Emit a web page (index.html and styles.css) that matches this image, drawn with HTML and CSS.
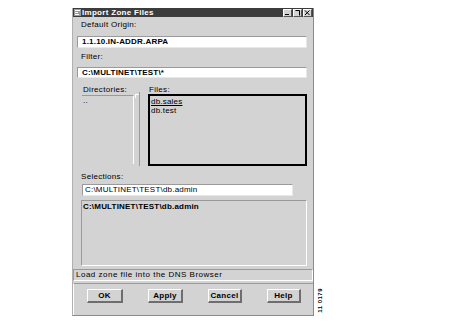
FILE: index.html
```html
<!DOCTYPE html>
<html>
<head>
<meta charset="utf-8">
<link rel="stylesheet" href="styles.css">
</head>
<body>
<div class="page">
  <div class="dialog">
    <div class="titlebar">
      <svg class="ticon" width="7" height="7" viewBox="0 0 7 7"><rect x="0" y="0" width="7" height="7" fill="#9a9a9a"/><rect x="1" y="1" width="5" height="1" fill="#fff"/><rect x="1" y="3" width="3" height="1" fill="#fff"/><rect x="1" y="5" width="4" height="1" fill="#fff"/></svg>
      <span class="ttext">Import Zone Files</span>
      <div class="tbtns">
        <span class="tb"><svg width="7" height="6" viewBox="0 0 7 6"><rect x="1" y="4" width="4" height="1" fill="#000"/></svg></span>
        <span class="tb"><svg width="7" height="6" viewBox="0 0 7 6"><path d="M1.5 0.5H5.5V5.5" fill="none" stroke="#000" stroke-width="1"/></svg></span>
        <span class="tb"><svg width="7" height="6" viewBox="0 0 7 6"><path d="M1 0.5L5.5 5M5.5 0.5L1 5" fill="none" stroke="#000" stroke-width="1"/></svg></span>
      </div>
    </div>
    <div class="body">
      <div class="lbl l-origin">Default Origin:</div>
      <div class="field f-origin">1.1.10.IN-ADDR.ARPA</div>
      <div class="lbl l-filter">Filter:</div>
      <div class="field f-filter">C:\MULTINET\TEST\*</div>
      <div class="mid">
        <div class="dircol">
          <div class="lbl">Directories:</div>
          <div class="dirlist"><div class="item">..</div></div>
        </div>
        <div class="sash"><span class="tick"></span></div>
        <div class="filecol">
          <div class="lbl">Files:</div>
          <div class="filelist">
            <div class="item sel">db.sales</div>
            <div class="item">db.test</div>
          </div>
        </div>
      </div>
      <div class="lbl l-sel">Selections:</div>
      <div class="field f-sel">C:\MULTINET\TEST\db.admin</div>
      <div class="selarea"><div class="item">C:\MULTINET\TEST\db.admin</div></div>
    </div>
    <div class="status">Load zone file into the DNS Browser</div>
    <div class="btnbar">
      <div class="btn b-ok">OK</div>
      <div class="btn b-apply">Apply</div>
      <div class="btn b-cancel">Cancel</div>
      <div class="btn b-help">Help</div>
    </div>
  </div>
  <div class="figid">11 0179</div>
</div>
</body>
</html>
```
FILE: styles.css
```css
html, body {
  margin: 0;
  padding: 0;
  background: #fff;
}
body {
  font-family: "Liberation Sans", Arial, sans-serif;
  font-size: 8px;
  color: #000;
}
.page {
  display: flex;
  align-items: flex-end;
  padding: 8px 0 0 72px;
}
.dialog {
  width: 242px;
  height: 308px;
  box-sizing: border-box;
  background: #d3d3d3;
  border-left: 1px solid #b0b0b0;
  border-right: 1px solid #8a8a8a;
  border-bottom: 1px solid #8a8a8a;
  display: flex;
  flex-direction: column;
}
.titlebar {
  height: 9px;
  background: #3c3c3c;
  display: flex;
  align-items: center;
  color: #fff;
  font-weight: bold;
  line-height: 9px;
}
.ticon {
  margin: 0 1px 0 1px;
}
.ttext {
  flex: 1;
  letter-spacing: 0.3px;
}
.tbtns {
  display: flex;
  margin-right: 1px;
}
.tb {
  width: 9px;
  height: 8px;
  box-sizing: border-box;
  background: #d3d3d3;
  border: 1px solid #fff;
  border-right-color: #555;
  border-bottom-color: #555;
  display: flex;
  align-items: center;
  justify-content: center;
  margin-left: 1px;
}
.tb svg { display: block; }
.body {
  display: flex;
  flex-direction: column;
  padding: 0 6px 0 4px;
  flex: 1;
}
.lbl {
  height: 10px;
  line-height: 10px;
  padding-left: 4px;
  letter-spacing: 0.3px;
  white-space: nowrap;
}
.l-origin { margin-top: 3px; }
.field {
  box-sizing: border-box;
  background: #fff;
  border: 1px solid #9a9a9a;
  border-right-color: #e8e8e8;
  border-bottom-color: #e8e8e8;
  padding-left: 4px;
  font-weight: bold;
  white-space: nowrap;
  letter-spacing: 0.2px;
}
.f-origin {
  margin-top: 6px;
  height: 12px;
  line-height: 10px;
}
.l-filter { margin-top: 4px; }
.f-filter {
  margin-top: 5px;
  height: 11px;
  line-height: 9px;
}
.mid {
  display: flex;
  margin-top: 7px;
  height: 81px;
}
.dircol {
  margin-left: 5px;
  width: 52px;
  display: flex;
  flex-direction: column;
}
.dircol .lbl { padding-left: 1px; }
.dirlist {
  flex: 1;
  border-top: 1px solid #9a9a9a;
  border-right: 1px solid #fff;
  margin-bottom: 2px;
}
.item {
  height: 10px;
  line-height: 10px;
  padding-left: 1px;
  white-space: nowrap;
  letter-spacing: 0.2px;
}
.sash {
  position: relative;
  width: 13px;
  margin-top: 7px;
}
.sash::before {
  content: "";
  position: absolute;
  left: 5px;
  top: 0;
  bottom: 0;
  width: 1px;
  background: #9a9a9a;
}
.tick {
  position: absolute;
  left: 1px;
  top: 2px;
  width: 3px;
  height: 3px;
  border-top: 1px solid #fff;
  border-left: 1px solid #fff;
}
.filecol {
  flex: 1;
  display: flex;
  flex-direction: column;
  margin-left: 1px;
}
.filecol .lbl {
  height: 9px;
  line-height: 10px;
  padding-left: 1px;
}
.filelist {
  flex: 1;
  border: 2px solid #000;
  padding-top: 1px;
}
.filelist .item {
  height: 9px;
  line-height: 9px;
}
.sel span, .item.sel {
  text-decoration: underline;
}
.l-sel { margin-top: 6px; }
.f-sel {
  margin-top: 2px;
  margin-left: 5px;
  width: 211px;
  height: 12px;
  line-height: 10px;
  font-weight: normal;
  padding-left: 2px;
}
.selarea {
  margin-top: 4px;
  margin-left: 4px;
  height: 66px;
  box-sizing: border-box;
  border: 1px solid #9a9a9a;
  border-right-color: #fff;
  border-bottom-color: #fff;
  font-weight: bold;
  padding-top: 1px;
}
.status {
  margin-top: 3px;
  height: 12px;
  box-sizing: border-box;
  border: 1px solid #9a9a9a;
  border-right-color: #fff;
  border-bottom-color: #fff;
  line-height: 10px;
  padding-left: 2px;
  letter-spacing: 0.5px;
  white-space: nowrap;
  margin-right: 0;
}
.btnbar {
  margin-top: 2px;
  flex: 1;
  box-sizing: border-box;
  border-top: 1px solid #9a9a9a;
  border-left: 1px solid #fff;
  display: flex;
  align-items: flex-start;
  padding: 5px 0 0 13px;
  gap: 25px;
}
.btn {
  height: 14px;
  box-sizing: border-box;
  border: 1px solid #fff;
  border-right: 2px solid #6e6e6e;
  border-bottom: 2px solid #6e6e6e;
  font-weight: bold;
  text-align: center;
  line-height: 11px;
  letter-spacing: 0.3px;
}
.b-ok { width: 36px; }
.b-apply { width: 35px; }
.b-cancel { width: 34px; }
.b-help { width: 34px; }
.figid {
  writing-mode: vertical-rl;
  transform: rotate(180deg);
  font-size: 6px;
  margin: 0 0 3px 3px;
  letter-spacing: 0.5px;
  font-weight: bold;
}
```
